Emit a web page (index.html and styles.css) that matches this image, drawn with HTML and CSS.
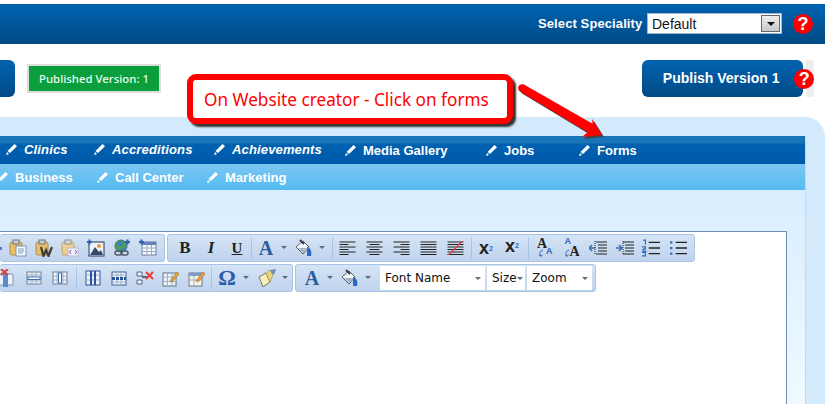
FILE: index.html
```html
<!DOCTYPE html>
<html lang="en">
<head>
  <meta charset="UTF-8" />
  <title>Website creator</title>
  <link rel="stylesheet" href="styles.css">
</head>
<body>

  <!-- shared icons -->
  <svg class="defs" width="0" height="0">
    <symbol id="pencil" viewBox="0 0 12 12"><path d="M8.500 1 11 3.300 4 10 1.500 8z" fill="#fff"/><path d="M1 9 3 11 0 12z" fill="#fff"/></symbol>
    <symbol id="paste" viewBox="0 0 18 18"><rect x="1" y="3" width="12" height="13" rx="2" fill="#e8bf68" stroke="#b08f4c"/><rect x="4" y="1" width="6" height="4" fill="#c9ced6" stroke="#70757e"/><rect x="7" y="7" width="10" height="10" fill="#f6f9fd" stroke="#7d93ad"/><path d="M9 10h6M9 12h6M9 14h5" stroke="#7f9cc0"/></symbol>
    <symbol id="pasteword" viewBox="0 0 18 18"><rect x="1" y="3" width="12" height="13" rx="2" fill="#e8bf68" stroke="#b08f4c"/><rect x="4" y="1" width="6" height="4" fill="#c9ced6" stroke="#70757e"/><path d="M6 8 8.500 17 11 11 13.500 17 17 8" fill="none" stroke="#3f3f3a" stroke-width="2.200"/></symbol>
    <symbol id="pastehtml" viewBox="0 0 18 18"><rect x="1" y="3" width="12" height="13" rx="2" fill="#edcf8e" stroke="#c0a870"/><rect x="4" y="1" width="6" height="4" fill="#d3d7de" stroke="#8f949c"/><rect x="7" y="9" width="10" height="8" fill="#f2f2fa" stroke="#b9b9d0"/><path d="M10 11 8.500 13 10 15M14 11 15.500 13 14 15" fill="none" stroke="#8a4bb5"/></symbol>
    <symbol id="image" viewBox="0 0 18 18"><rect x="2" y="3" width="15" height="14" fill="#eef3fa" stroke="#23375a"/><path d="M3 16 8 8l4 5 2-2 2 5z" fill="#34496b"/><circle cx="12" cy="7" r="2" fill="#ef9a3a"/><path d="M0 3h5M2.500 .5v5" stroke="#2a62b5" stroke-width="2"/></symbol>
    <symbol id="globe" viewBox="0 0 18 18"><circle cx="8" cy="7" r="6" fill="#4d9b57" stroke="#3a6a94"/><path d="M5 3h5l-1 4H5zM9 9h3l-1 3H9z" fill="#3f7fc8"/><rect x="2" y="12" width="7" height="4" rx="2" fill="none" stroke="#50596a" stroke-width="1.500"/><rect x="8" y="12" width="7" height="4" rx="2" fill="none" stroke="#50596a" stroke-width="1.500"/><path d="M12 3h5M14.500 .5v5" stroke="#2a62b5" stroke-width="2"/></symbol>
    <symbol id="table" viewBox="0 0 18 18"><rect x="3" y="3" width="14" height="13" fill="#f6f9fd" stroke="#6b7f9b"/><rect x="3" y="3" width="14" height="3" fill="#5d83b8"/><path d="M3 9h14M3 12.500h14M8 6v10M12.500 6v10" stroke="#98abc4"/><path d="M0 3h5M2.500 .5v5" stroke="#2a62b5" stroke-width="2"/></symbol>
    <symbol id="delrow" viewBox="0 0 18 18"><path d="M2 5h14v11H2z" fill="#eef3fa" stroke="#7f93ad"/><rect x="6" y="5" width="5" height="13" fill="#5a8bd0"/><path d="M4 0 11 6M11 0 4 6" stroke="#e23b3b" stroke-width="2"/></symbol>
    <symbol id="tblrow" viewBox="0 0 18 18"><rect x="2" y="3" width="14" height="12" fill="#eef3fa" stroke="#6f7f96"/><path d="M2 6h14M2 12h14M7 3v12M11 3v12" stroke="#9dafc6"/><rect x="3" y="8" width="12" height="2.500" fill="#fff" stroke="#3f6cb0"/></symbol>
    <symbol id="tblcol" viewBox="0 0 18 18"><rect x="2" y="3" width="14" height="12" fill="#eef3fa" stroke="#6f7f96"/><path d="M2 7h14M2 11h14M6 3v12M12 3v12" stroke="#9dafc6"/><rect x="7.500" y="4" width="3" height="10" fill="#fff" stroke="#3f6cb0"/></symbol>
    <symbol id="inscol" viewBox="0 0 18 18"><rect x="2" y="2" width="14" height="14" fill="#eef3fa" stroke="#2b559a"/><path d="M2 6h14M2 11h14" stroke="#9dafc6"/><path d="M7 2v14M11 2v14" stroke="#2b559a" stroke-width="2"/></symbol>
    <symbol id="insrow" viewBox="0 0 18 18"><rect x="2" y="3" width="14" height="13" fill="#eef3fa" stroke="#3e5f93"/><path d="M2 6h14M2 13h14M7 3v13M11 3v13" stroke="#9dafc6"/><path d="M2 9.500h14" stroke="#2b559a" stroke-width="3" stroke-dasharray="3 1"/></symbol>
    <symbol id="delcell" viewBox="0 0 18 18"><path d="M1 3h5v4H1zM1 11h5v4H1z" fill="#eef3fa" stroke="#55657c"/><path d="M6 8h5" stroke="#55657c" stroke-width="2"/><path d="M10 3l7 7M17 3l-7 7" stroke="#e8413c" stroke-width="2"/></symbol>
    <symbol id="edittbl" viewBox="0 0 18 18"><rect x="1" y="4" width="13" height="13" fill="#eef3fa" stroke="#66758a"/><path d="M1 8h13M1 12.500h13M5.500 4v13M10 4v13" stroke="#9dafc6"/><path d="M8 12 15 3l2 2-7 8z" fill="#e6a93a" stroke="#8f6420" stroke-width=".6"/></symbol>
    <symbol id="editcell" viewBox="0 0 18 18"><rect x="1" y="4" width="13" height="13" fill="#f6f4e4" stroke="#66758a"/><rect x="1" y="4" width="13" height="3" fill="#7f9fc9"/><path d="M1 11h13M6 7v10" stroke="#9dafc6"/><path d="M8 12 15 3l2 2-7 8z" fill="#e6a93a" stroke="#b3482c" stroke-width=".6"/></symbol>
    <symbol id="brush" viewBox="0 0 18 18"><path d="M1 8 8 4l4 9-7 5z" fill="#f8ecb8" stroke="#77776a"/><path d="M8 4 12 1l3 5-3 7z" fill="#e8d47a" stroke="#9a8d50" stroke-width=".6"/><path d="M12 1 18 0l-1 4-2 2z" fill="#6f8fb8"/></symbol>
    <symbol id="bucket" viewBox="0 0 18 18"><path d="M1 8 8 2l6 6-6 7z" fill="#f6f8fb" stroke="#58606c"/><path d="M5 1 9 5" stroke="#333a44" stroke-width="2"/><path d="M12 8c4 1 5 5 4 9h-4z" fill="#2c68bd"/><path d="M3 9h9l-4 5z" fill="#a9b4c4"/></symbol>
    <symbol id="left" viewBox="0 0 16 14"><path d="M0 1h16M0 3.500h9M0 6h16M0 8.500h9M0 11h16M0 13.500h9" stroke="#222"/></symbol>
    <symbol id="center" viewBox="0 0 16 14"><path d="M0 1h16M3 3.500h10M0 6h16M3 8.500h10M0 11h16M3 13.500h10" stroke="#222"/></symbol>
    <symbol id="right" viewBox="0 0 16 14"><path d="M0 1h16M7 3.500h9M0 6h16M7 8.500h9M0 11h16M7 13.500h9" stroke="#222"/></symbol>
    <symbol id="justify" viewBox="0 0 16 14"><path d="M0 1h16M0 3.500h16M0 6h16M0 8.500h16M0 11h16M0 13.500h16" stroke="#222"/></symbol>
    <symbol id="strike" viewBox="0 0 16 14"><path d="M0 1h16M0 3.500h16M0 6h16M0 8.500h16M0 11h16M0 13.500h16" stroke="#222"/><path d="M1 14 15 0" stroke="#e23b3b" stroke-width="1.300"/></symbol>
    <symbol id="curve" viewBox="0 0 8 8"><path d="M5 1C2 2 1 5 3 7" fill="none" stroke="#3a6ab0"/><path d="M1 6 3 7.500 4.500 5.500" fill="none" stroke="#3a6ab0"/></symbol>
    <symbol id="outdent" viewBox="0 0 18 16"><path d="M7 2h11M9 5h9M9 8h9M9 11h9M7 14h11" stroke="#222"/><path d="M6 8H0M3 5 0 8l3 3" fill="none" stroke="#3a6ab0" stroke-width="1.500"/><path d="M6 1v14" stroke="#222" stroke-dasharray="1 1"/></symbol>
    <symbol id="indent" viewBox="0 0 18 16"><path d="M7 2h11M9 5h9M9 8h9M9 11h9M7 14h11" stroke="#222"/><path d="M0 8h6M3 5l3 3-3 3" fill="none" stroke="#3a6ab0" stroke-width="1.500"/><path d="M7 1v14" stroke="#222" stroke-dasharray="1 1"/></symbol>
    <symbol id="numlist" viewBox="0 0 16 16"><path d="M6 3h10M6 8h10M6 13h10" stroke="#222" stroke-width="1.200"/><path d="M1 1h2v4M0 7h3v2H1v2h3M0 12h3v3H0" fill="none" stroke="#2c68bd"/></symbol>
    <symbol id="bullist" viewBox="0 0 16 16"><path d="M6 3h10M6 8h10M6 13h10" stroke="#222" stroke-width="1.200"/><path d="M1 3h2M1 8h2M1 13h2" stroke="#2c68bd" stroke-width="2"/></symbol>
  </svg>

  <div class="page">
    <header class="topbar">
      <label class="speciality-label">Select Speciality</label>
      <div class="select">
        <span class="select-value">Default</span>
        <span class="select-arrow"></span>
      </div>
      <span class="help">?</span>
    </header>

    <div class="actions">
      <span class="btn btn-cut"></span>
      <span class="published">Published Version: 1</span>
      <span class="publish-wrap">
        <span class="btn btn-publish">Publish Version 1</span>
        <span class="help help-publish">?</span>
      </span>
    </div>

    <section class="panel">
      <div class="inner">
        <!-- Main tabs -->
        <nav class="tabs tabs-main">
          <a class="tab tab-em"><svg class="pencil"><use href="#pencil"/></svg>Clinics</a>
          <a class="tab tab-em"><svg class="pencil"><use href="#pencil"/></svg>Accreditions</a>
          <a class="tab tab-em"><svg class="pencil"><use href="#pencil"/></svg>Achievements</a>
          <a class="tab"><svg class="pencil"><use href="#pencil"/></svg>Media Gallery</a>
          <a class="tab"><svg class="pencil"><use href="#pencil"/></svg>Jobs</a>
          <a class="tab"><svg class="pencil"><use href="#pencil"/></svg>Forms</a>
        </nav>
        <!-- Sub tabs -->
        <nav class="tabs tabs-sub">
          <a class="tab"><svg class="pencil"><use href="#pencil"/></svg>Business</a>
          <a class="tab"><svg class="pencil"><use href="#pencil"/></svg>Call Center</a>
          <a class="tab"><svg class="pencil"><use href="#pencil"/></svg>Marketing</a>
        </nav>

        <div class="content">
          <div class="editor">
            <div class="tool-row">
              <div class="group group-a">
                <span class="tool"><svg class="ico"><use href="#paste"/></svg></span>
                <span class="tool"><svg class="ico"><use href="#pasteword"/></svg></span>
                <span class="tool"><svg class="ico"><use href="#pastehtml"/></svg></span>
                <span class="tool"><svg class="ico"><use href="#image"/></svg></span>
                <span class="tool"><svg class="ico"><use href="#globe"/></svg></span>
                <span class="tool"><svg class="ico"><use href="#table"/></svg></span>
              </div>
              <div class="group group-b">
                <span class="tool glyph-b">B</span>
                <span class="tool glyph-i">I</span>
                <span class="tool glyph-u">U</span>
                <i class="sep"></i>
                <span class="tool tool-split glyph-a">A</span><span class="drop"></span>
                <span class="tool tool-split"><svg class="ico"><use href="#bucket"/></svg></span><span class="drop"></span>
                <i class="sep sep-wide"></i>
                <span class="tool tool-wide"><svg class="ico-line"><use href="#left"/></svg></span>
                <span class="tool tool-wide"><svg class="ico-line"><use href="#center"/></svg></span>
                <span class="tool tool-wide"><svg class="ico-line"><use href="#right"/></svg></span>
                <span class="tool tool-wide"><svg class="ico-line"><use href="#justify"/></svg></span>
                <span class="tool tool-wide"><svg class="ico-line"><use href="#strike"/></svg></span>
                <i class="sep sep-wide"></i>
                <span class="tool glyph-x">x<sup>2</sup></span>
                <span class="tool glyph-x glyph-x-sub">x<sub>2</sub></span>
                <i class="sep sep-more"></i>
                <span class="tool tool-mid dir dir-ltr"><b class="dir-big">A</b><b class="dir-small">A</b><svg class="dir-curve"><use href="#curve"/></svg></span>
                <span class="tool tool-mid dir dir-rtl"><b class="dir-big">A</b><b class="dir-small">A</b><svg class="dir-curve"><use href="#curve"/></svg></span>
                <span class="tool tool-mid"><svg class="ico"><use href="#outdent"/></svg></span>
                <span class="tool tool-mid"><svg class="ico"><use href="#indent"/></svg></span>
                <span class="tool tool-mid"><svg class="ico"><use href="#numlist"/></svg></span>
                <span class="tool tool-mid"><svg class="ico"><use href="#bullist"/></svg></span>
              </div>
            </div>
            <div class="tool-row">
              <div class="group group-c">
                <span class="tool tool-first"><svg class="ico"><use href="#delrow"/></svg></span>
                <span class="tool"><svg class="ico"><use href="#tblrow"/></svg></span>
                <span class="tool"><svg class="ico"><use href="#tblcol"/></svg></span>
                <i class="sep sep-tbl"></i>
                <span class="tool"><svg class="ico"><use href="#inscol"/></svg></span>
                <span class="tool"><svg class="ico"><use href="#insrow"/></svg></span>
                <span class="tool"><svg class="ico"><use href="#delcell"/></svg></span>
                <span class="tool"><svg class="ico"><use href="#edittbl"/></svg></span>
                <span class="tool"><svg class="ico"><use href="#editcell"/></svg></span>
                <i class="sep"></i>
                <span class="tool glyph-omega">Ω</span><span class="drop"></span>
                <span class="tool tool-brush"><svg class="ico"><use href="#brush"/></svg></span><span class="drop"></span>
              </div>
              <div class="group group-d">
                <span class="tool tool-split glyph-a">A</span><span class="drop"></span>
                <span class="tool tool-split"><svg class="ico"><use href="#bucket"/></svg></span><span class="drop"></span>
                <span class="combo combo-font">Font Name<b class="combo-arrow"></b></span>
                <span class="combo combo-size">Size<b class="combo-arrow"></b></span>
                <span class="combo combo-zoom">Zoom<b class="combo-arrow"></b></span>
              </div>
            </div>
          </div>
        </div>
      </div>
    </section>
  </div>

  <!-- Annotation laid over the page -->
  <div class="callout">On Website creator - Click on forms</div>
  <svg class="arrow" width="110" height="70" viewBox="0 0 110 70">
    <path d="M8 .6 76.500 39.700 76 35 86 51 66 53 71.500 48.300 4 7.400C0 4 3 -1 8 .6Z" transform="translate(2 2)" fill="#444"/>
    <path d="M8 .6 76.500 39.700 76 35 86 51 66 53 71.500 48.300 4 7.400C0 4 3 -1 8 .6Z" fill="#f00"/>
  </svg>

</body>
</html>
```

FILE: styles.css
```css
* {
  box-sizing: border-box;
}

body {
  margin: 0;
  width: 840px;
  height: 404px;
  overflow: hidden;
  position: relative;
  background-color: white;
  font-family: "Liberation Sans", Arial, sans-serif;
}

.defs {
  position: absolute;
}

.page {
  width: 825px;
  padding-top: 4px;
}

/* Top bar */
.topbar {
  height: 40px;
  display: flex;
  align-items: center;
  padding-left: 538px;
  background: linear-gradient(#0063b1, #004a85);
}

.speciality-label {
  width: 109px;
  margin-top: -2px;
  color: white;
  font-size: 13px;
  font-weight: bold;
  letter-spacing: 0.1px;
}

.select {
  width: 135px;
  height: 21px;
  margin-top: -1px;
  display: flex;
  align-items: center;
  justify-content: space-between;
  background-color: white;
  border: 1px solid #a5b6c8;
  padding: 0 1px 0 4px;
  font-size: 14px;
  color: #111;
}

.select-arrow {
  width: 19px;
  height: 17px;
  background: linear-gradient(#eee, #c9c9c9);
  border: 1px solid #667;
  position: relative;
}

.select-arrow::after {
  content: "";
  position: absolute;
  left: 5px;
  top: 6px;
  border: 4px solid transparent;
  border-top: 4px solid #111;
  border-bottom: 0;
}

.help {
  width: 20px;
  height: 20px;
  margin-left: 11px;
  border-radius: 50%;
  background-color: #f00;
  color: white;
  font-size: 18px;
  font-weight: bold;
  line-height: 20px;
  text-align: center;
}

/* Publish row */
.actions {
  height: 73px;
  padding-top: 16px;
  display: flex;
  align-items: flex-start;
}

.btn {
  height: 37px;
  border-radius: 6px;
  background: linear-gradient(#0063b1, #004a85);
  color: white;
}

.btn-cut {
  width: 15px;
  border-radius: 0 6px 6px 0;
}

.published {
  width: 134px;
  height: 29px;
  margin: 4px 0 0 12px;
  border: 2px solid #ddd;
  background-color: #0a9e3c;
  color: #e8fff0;
  font-family: "Noto Sans", sans-serif;
  font-size: 11.400px;
  font-weight: 500;
  line-height: 25px;
  text-align: center;
}

.publish-wrap {
  margin-left: 481px;
  display: flex;
  align-items: center;
  background: linear-gradient(to right, transparent 164px, #eee 164px);
  width: 172px;
}

.btn-publish {
  width: 164px;
  font-size: 14px;
  font-weight: bold;
  line-height: 37px;
  text-align: center;
  padding-right: 3px;
}

.help-publish {
  margin-left: -9px;
}

/* Main panel */
.panel {
  height: 287px;
  padding: 19px 19px 0 0;
  background-color: #d3eafc;
  border-radius: 0 20px 0 0;
}

.inner {
  height: 100%;
  border-right: 1px solid #bcdcf8;
}

.tabs {
  display: grid;
}

.tab {
  display: flex;
  align-items: center;
  color: white;
  font-size: 13px;
  font-weight: bold;
  white-space: nowrap;
}

.tab-em {
  font-style: italic;
  letter-spacing: 0.15px;
  padding-bottom: 2px;
}

.pencil {
  width: 12px;
  height: 12px;
  margin-right: 6px;
  flex: none;
}

.tabs-main {
  height: 28px;
  padding-left: 6px;
  grid-template-columns: 88px 120px 131px 141px 93px 1fr;
  background: linear-gradient(#1a75b8 0, #1a75b8 7px, #0062b0 8px, #0058aa 100%);
}

.tabs-sub {
  height: 26px;
  margin-left: -3px;
  grid-template-columns: 100px 110px 1fr;
  background: linear-gradient(#7cc6f2, #54bbf2);
}

.content {
  height: 214px;
  padding-top: 41px;
  background: linear-gradient(#d8eeff, #f0f9ff);
}

/* Editor */
.editor {
  width: 787px;
  height: 173px;
  padding-top: 2px;
  background-color: white;
  border: 1px solid #6f8fb8;
  border-left: 0;
  border-bottom: 0;
}

.tool-row {
  display: flex;
  height: 28px;
  margin-bottom: 2px;
}

.group {
  height: 28px;
  display: flex;
  align-items: center;
  background: linear-gradient(#d5e4f6, #bfd3ec);
  border: 1px solid #a9c3e4;
  border-left: 0;
  border-radius: 3px;
}

.group-a {
  width: 165px;
  padding-left: 5px;
}

.group-a::before {
  content: "";
  width: 2px;
  height: 3px;
  margin: 0 0 0 -5px;
  margin-right: 3px;
  flex: none;
  background-color: #4a7cc0;
}

.group-b {
  width: 528px;
  margin-left: 2px;
  padding-left: 4px;
  border-left: 1px solid #a9c3e4;
}

.group-c {
  width: 293px;
}

.group-d {
  width: 301px;
  margin-left: 2px;
  padding-left: 4px;
  border-left: 1px solid #a9c3e4;
}

.tool {
  width: 26px;
  height: 22px;
  flex: none;
  display: flex;
  align-items: center;
  justify-content: center;
  position: relative;
  color: #222;
}

.tool-first {
  margin: 0 2px 0 -7px;
}

.tool-wide {
  width: 27px;
}

.tool-mid {
  width: 26.500px;
}

.tool-split {
  width: 24px;
}

.tool-brush {
  width: 25px;
  margin-left: 2px;
}

.ico {
  width: 18px;
  height: 18px;
}

.ico-line {
  width: 17px;
  height: 14px;
}

.sep {
  width: 1px;
  height: 22px;
  margin: 0 2px 0 1px;
  flex: none;
  background-color: #a9c3e4;
}

.sep-wide {
  margin: 0 1px 0 2px;
}

.sep-more {
  margin: 0 3px 0 3px;
}

.sep-tbl {
  margin: 0 3px 0 3px;
}

.drop {
  width: 14px;
  height: 22px;
  flex: none;
  position: relative;
}

.drop::after {
  content: "";
  position: absolute;
  left: 3px;
  top: 9px;
  border: 3px solid transparent;
  border-top: 3px solid #5a6a80;
  border-bottom: 0;
}

.group-c .drop {
  width: 12px;
}

.glyph-b,
.glyph-i,
.glyph-u {
  font-family: "Liberation Serif", serif;
  font-size: 17px;
  font-weight: bold;
}

.glyph-i {
  font-style: italic;
}

.glyph-u {
  font-size: 15px;
  text-decoration: underline;
}

.glyph-a {
  font-family: "Liberation Serif", serif;
  font-size: 20px;
  font-weight: bold;
  color: #2c5e9e;
}

.glyph-omega {
  font-family: "Liberation Serif", serif;
  font-size: 22px;
  font-weight: bold;
  color: #2c5ea8;
}

.glyph-x {
  font-size: 18px;
  font-weight: bold;
  line-height: 18px;
  color: #222;
}

.glyph-x-sub {
  padding-bottom: 5px;
}

.glyph-x sup,
.glyph-x sub {
  font-size: 7px;
  line-height: 7px;
  color: #2c68bd;
}

.dir-big {
  position: absolute;
  left: 5px;
  top: -1px;
  font-family: "Liberation Serif", serif;
  font-size: 14px;
}

.dir-small {
  position: absolute;
  left: 14px;
  top: 9px;
  font-size: 9px;
  color: #2c68bd;
}

.dir-curve {
  position: absolute;
  left: 6px;
  top: 12px;
  width: 8px;
  height: 8px;
}

.dir-rtl .dir-big {
  left: 11px;
  top: 7px;
  font-size: 14px;
}

.dir-rtl .dir-small {
  left: 6px;
  top: -1px;
}

.dir-rtl .dir-curve {
  left: 5px;
}

.combo {
  height: 24px;
  flex: none;
  display: flex;
  align-items: center;
  justify-content: space-between;
  padding: 0 4px 0 5px;
  margin-right: 2px;
  background-color: white;
  font-family: "DejaVu Sans", sans-serif;
  font-size: 12px;
  color: #111;
}

.combo-font {
  width: 105px;
  margin-left: 4px;
}

.combo-size {
  width: 38px;
  padding: 0 3px 0 5px;
}

.combo-zoom {
  width: 65px;
}

.combo-arrow {
  border: 3px solid transparent;
  border-top: 3px solid #5a6a80;
  border-bottom: 0;
}

/* Annotation */
.callout {
  position: absolute;
  left: 187px;
  top: 74px;
  width: 326px;
  height: 50px;
  border: 6px solid #f00;
  border-radius: 9px;
  background-color: white;
  box-shadow: 3px 3px 2px #333;
  padding-left: 11px;
  color: #f00;
  font-family: "Noto Sans", sans-serif;
  font-size: 17.200px;
  line-height: 39px;
  white-space: nowrap;
}

.arrow {
  position: absolute;
  left: 516px;
  top: 84px;
}
```
